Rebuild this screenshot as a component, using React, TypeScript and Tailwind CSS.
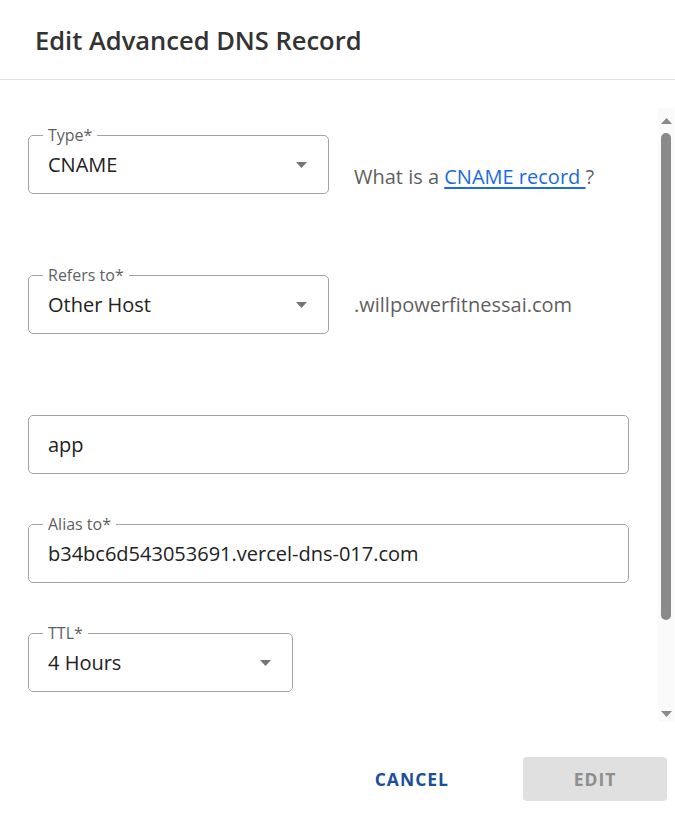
import React from "react";

function Caret() {
  return (
    <svg width="11" height="6" viewBox="0 0 11 6" className="shrink-0">
      <path d="M0 0 L11 0 L5.5 6 Z" fill="#757575" />
    </svg>
  );
}

function Field({
  label,
  value,
  width,
  select,
}: {
  label?: string;
  value: string;
  width: string;
  select?: boolean;
}) {
  return (
    <div
      className={`relative ${width} h-[59px] rounded-[5px] border border-[#a3a3a3] flex items-center pl-[19px] pr-[21px]`}
    >
      {label && (
        <span className="absolute -top-[11px] left-[14px] bg-white px-[5px] text-[16px] leading-[20px] text-[#5f5f5f]">
          {label}
        </span>
      )}
      <span className="flex-1 text-[20px] leading-[26px] text-[#222]">{value}</span>
      {select && <Caret />}
    </div>
  );
}

export default function App() {
  return (
    <div
      className="w-[675px] h-[822px] bg-white flex flex-col overflow-hidden"
      style={{ fontFamily: '"Open Sans", "Noto Sans", sans-serif' }}
    >
      <div className="h-[80px] shrink-0 border-b border-[#e0e0e0] flex items-center pl-[35px] pt-[1px]">
        <h1 className="text-[25.5px] font-semibold text-[#333]">Edit Advanced DNS Record</h1>
      </div>

      <div className="h-[660px] shrink-0 flex">
        <div className="flex-1 overflow-hidden pl-[28px] pt-[55px] flex flex-col">
          <div className="flex items-start">
            <Field label="Type*" value="CNAME" width="w-[301px]" select />
            <div className="ml-[25px] mt-[29px] text-[20px] leading-[26px] text-[#5f5f5f]">
              What is a{" "}
              <a className="text-[#1a6be0] underline underline-offset-[3px]">CNAME record </a>?
            </div>
          </div>

          <div className="flex items-center mt-[81px]">
            <Field label="Refers to*" value="Other Host" width="w-[301px]" select />
            <div className="ml-[25px] text-[20px] text-[#5f5f5f]">.willpowerfitnessai.com</div>
          </div>

          <div className="mt-[81px]">
            <Field value="app" width="w-[601px]" />
          </div>

          <div className="mt-[50px]">
            <Field label="Alias to*" value="b34bc6d543053691.vercel-dns-017.com" width="w-[601px]" />
          </div>

          <div className="mt-[50px]">
            <Field label="TTL*" value="4 Hours" width="w-[265px]" select />
          </div>
        </div>

        <div className="w-[16px] shrink-0 mr-[1px] mt-[28px] h-[614px] bg-[#fafafa] flex flex-col items-center">
          <svg width="11" height="6" viewBox="0 0 11 6" className="mt-[10px]">
            <path d="M0 6 L11 6 L5.5 0 Z" fill="#8a8a8a" />
          </svg>
          <div className="mt-[9px] w-[10px] h-[487px] rounded-[5px] bg-[#8a8a8a]" />
          <div className="flex-1" />
          <svg width="11" height="6" viewBox="0 0 11 6" className="mb-[5px]">
            <path d="M0 0 L11 0 L5.5 6 Z" fill="#8a8a8a" />
          </svg>
        </div>
      </div>

      <div className="flex-1 flex items-center justify-end pr-[8px] pb-[4px]">
        <button className="text-[17.5px] font-bold tracking-[1px] text-[#1b4f9c] mr-[74px]">
          CANCEL
        </button>
        <button className="w-[144px] h-[44px] rounded-[4px] bg-[#e0e0e0] text-[17.5px] font-bold tracking-[1px] text-[#8e8e8e]">
          EDIT
        </button>
      </div>
    </div>
  );
}
